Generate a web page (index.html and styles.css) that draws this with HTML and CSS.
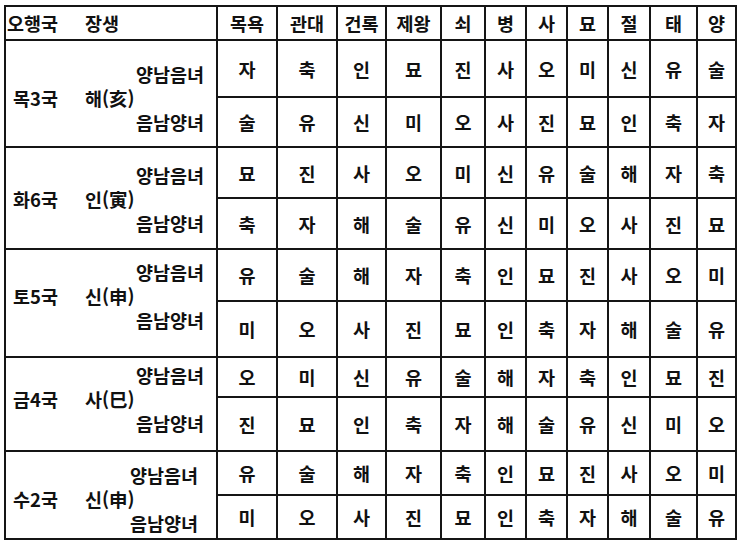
FILE: index.html
```html
<!DOCTYPE html>
<html lang="ko">
<head>
<meta charset="utf-8">
<title>장생 표</title>
<link rel="stylesheet" href="styles.css">
</head>
<body>
<div class="table">
  <div class="cell first head"><span>오행국</span><span>장생</span></div>
  <div class="cell">목욕</div><div class="cell">관대</div><div class="cell">건록</div><div class="cell">제왕</div><div class="cell">쇠</div><div class="cell">병</div><div class="cell">사</div><div class="cell">묘</div><div class="cell">절</div><div class="cell">태</div><div class="cell">양</div>

  <div class="cell first group g1">
    <span class="gender top">양남음녀</span><span class="guk">목3국</span><span class="branch">해(亥)</span><span class="gender bottom">음남양녀</span>
  </div>
  <div class="cell">자</div><div class="cell">축</div><div class="cell">인</div><div class="cell">묘</div><div class="cell">진</div><div class="cell">사</div><div class="cell">오</div><div class="cell">미</div><div class="cell">신</div><div class="cell">유</div><div class="cell">술</div>
  <div class="cell">술</div><div class="cell">유</div><div class="cell">신</div><div class="cell">미</div><div class="cell">오</div><div class="cell">사</div><div class="cell">진</div><div class="cell">묘</div><div class="cell">인</div><div class="cell">축</div><div class="cell">자</div>

  <div class="cell first group g2">
    <span class="gender top">양남음녀</span><span class="guk">화6국</span><span class="branch">인(寅)</span><span class="gender bottom">음남양녀</span>
  </div>
  <div class="cell">묘</div><div class="cell">진</div><div class="cell">사</div><div class="cell">오</div><div class="cell">미</div><div class="cell">신</div><div class="cell">유</div><div class="cell">술</div><div class="cell">해</div><div class="cell">자</div><div class="cell">축</div>
  <div class="cell">축</div><div class="cell">자</div><div class="cell">해</div><div class="cell">술</div><div class="cell">유</div><div class="cell">신</div><div class="cell">미</div><div class="cell">오</div><div class="cell">사</div><div class="cell">진</div><div class="cell">묘</div>

  <div class="cell first group g3">
    <span class="gender top">양남음녀</span><span class="guk">토5국</span><span class="branch">신(申)</span><span class="gender bottom">음남양녀</span>
  </div>
  <div class="cell">유</div><div class="cell">술</div><div class="cell">해</div><div class="cell">자</div><div class="cell">축</div><div class="cell">인</div><div class="cell">묘</div><div class="cell">진</div><div class="cell">사</div><div class="cell">오</div><div class="cell">미</div>
  <div class="cell">미</div><div class="cell">오</div><div class="cell">사</div><div class="cell">진</div><div class="cell">묘</div><div class="cell">인</div><div class="cell">축</div><div class="cell">자</div><div class="cell">해</div><div class="cell">술</div><div class="cell">유</div>

  <div class="cell first group g4">
    <span class="gender top">양남음녀</span><span class="guk">금4국</span><span class="branch">사(巳)</span><span class="gender bottom">음남양녀</span>
  </div>
  <div class="cell">오</div><div class="cell">미</div><div class="cell">신</div><div class="cell">유</div><div class="cell">술</div><div class="cell">해</div><div class="cell">자</div><div class="cell">축</div><div class="cell">인</div><div class="cell">묘</div><div class="cell">진</div>
  <div class="cell">진</div><div class="cell">묘</div><div class="cell">인</div><div class="cell">축</div><div class="cell">자</div><div class="cell">해</div><div class="cell">술</div><div class="cell">유</div><div class="cell">신</div><div class="cell">미</div><div class="cell">오</div>

  <div class="cell first group g5">
    <span class="gender top">양남음녀</span><span class="guk">수2국</span><span class="branch">신(申)</span><span class="gender bottom">음남양녀</span>
  </div>
  <div class="cell">유</div><div class="cell">술</div><div class="cell">해</div><div class="cell">자</div><div class="cell">축</div><div class="cell">인</div><div class="cell">묘</div><div class="cell">진</div><div class="cell">사</div><div class="cell">오</div><div class="cell">미</div>
  <div class="cell">미</div><div class="cell">오</div><div class="cell">사</div><div class="cell">진</div><div class="cell">묘</div><div class="cell">인</div><div class="cell">축</div><div class="cell">자</div><div class="cell">해</div><div class="cell">술</div><div class="cell">유</div>
</div>
</body>
</html>
```
FILE: styles.css
```css
html, body {
  margin: 0;
  padding: 0;
  background: #ffffff;
}

body {
  font-family: "Noto Sans CJK KR", "Noto Sans", sans-serif;
  font-weight: 700;
  font-size: 18.5px;
  color: #111111;
}

.table {
  display: grid;
  width: max-content;
  margin: 5px 0 0 4px;
  padding: 2px;
  gap: 2px;
  background: #151515;
  grid-template-columns: 210px 58px 58px 47px 53px 42px 39px 39px 39px 40px 45px 37px;
  grid-template-rows: 32px 55px 48px 49px 49px 50px 54px 38px 52px 42px 42px;
}

.cell {
  background: #ffffff;
  display: flex;
  align-items: center;
  justify-content: center;
  line-height: 20px;
  white-space: nowrap;
}

.head.first {
  display: grid;
  grid-template-columns: 78px 1fr;
  align-items: center;
  justify-items: start;
  padding-left: 1px;
}

.group {
  grid-row: span 2;
  display: grid;
  grid-template-columns: 72px 1fr;
  grid-template-rows: 24px 24px 24px;
  align-content: center;
  justify-content: stretch;
  align-items: center;
  padding: 0 12px 0 7px;
}

.gender {
  grid-column: 1 / -1;
  justify-self: end;
}

.gender.top { grid-row: 1; }
.gender.bottom { grid-row: 3; }

.guk { grid-row: 2; grid-column: 1; }
.branch { grid-row: 2; grid-column: 2; }

.g1 { padding-top: 9px; }
.g2 { padding-top: 2px; }
.g3 { padding-bottom: 14px; }
.g4 { padding-bottom: 10px; }
.g5 { padding-top: 8px; padding-right: 18px; }
```
